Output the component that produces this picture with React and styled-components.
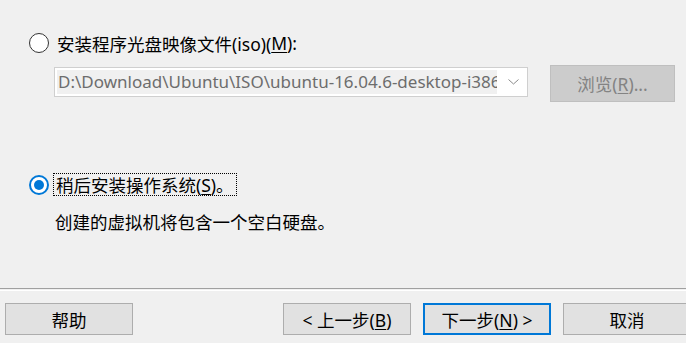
import styled, { createGlobalStyle } from "styled-components";

const GlobalStyle = createGlobalStyle`
  html, body {
    margin: 0;
    padding: 0;
    background: #f0f0f0;
  }
  body {
    font-family: "Noto Sans", "Noto Sans CJK SC", sans-serif;
    font-size: 17px;
    color: #000;
  }
`;

const Key = ({ children }) => <St.Key>{children}</St.Key>;

const Radio = ({ $checked }) => (
  <St.RadioCircle $checked={$checked}>
    {$checked && <St.RadioDot />}
  </St.RadioCircle>
);

const App = () => {
  return (
    <>
      <GlobalStyle />
      <St.Window>
        <St.Main>
          <St.OptionRow>
            <Radio />
            <St.Label>
              安装程序光盘映像文件(iso)(<Key>M</Key>):
            </St.Label>
          </St.OptionRow>

          <St.PathRow>
            <St.Combo>
              <St.ComboText>
                D:\Download\Ubuntu\ISO\ubuntu-16.04.6-desktop-i386.iso
              </St.ComboText>
              <St.ComboArrow>
                <svg width="11" height="6" viewBox="0 0 11 6">
                  <path
                    d="M0.5 0.5 L5.5 5 L10.5 0.5"
                    fill="none"
                    stroke="#8a8a8a"
                    strokeWidth="1"
                  />
                </svg>
              </St.ComboArrow>
            </St.Combo>
            <St.BrowseButton disabled>
              浏览(<Key>R</Key>)...
            </St.BrowseButton>
          </St.PathRow>

          <St.OptionRow $second>
            <Radio $checked />
            <St.Label $focused>
              稍后安装操作系统(<Key>S</Key>)。
            </St.Label>
          </St.OptionRow>

          <St.Description>创建的虚拟机将包含一个空白硬盘。</St.Description>
        </St.Main>

        <St.Separator />

        <St.Footer>
          <St.Button>帮助</St.Button>
          <St.NavGroup>
            <St.Button>
              &lt; 上一步(<Key>B</Key>)
            </St.Button>
            <St.Button $primary>
              下一步(<Key>N</Key>) &gt;
            </St.Button>
            <St.Button>取消</St.Button>
          </St.NavGroup>
        </St.Footer>
      </St.Window>
    </>
  );
};

const St = {
  Window: styled.div`
    width: 686px;
    height: 343px;
    overflow: hidden;
    background: #f0f0f0;
  `,
  Main: styled.section`
    display: flex;
    flex-direction: column;
    height: 288px;
    box-sizing: border-box;
    padding: 33px 0 0 29px;
  `,
  OptionRow: styled.div`
    display: flex;
    align-items: center;
    height: ${({ $second }) => ($second ? "23px" : "20px")};
    margin-top: ${({ $second }) => ($second ? "71px" : "0")};
    gap: ${({ $second }) => ($second ? "4px" : "7px")};
  `,
  RadioCircle: styled.span`
    display: flex;
    justify-content: center;
    align-items: center;
    width: 20px;
    height: 20px;
    box-sizing: border-box;
    border-radius: 50%;
    background: #fff;
    border: ${({ $checked }) =>
      $checked ? "2px solid #0078d7" : "1.5px solid #333"};
    flex-shrink: 0;
  `,
  RadioDot: styled.span`
    width: 10px;
    height: 10px;
    border-radius: 50%;
    background: #0078d7;
  `,
  Label: styled.span`
    display: flex;
    align-items: center;
    height: 23px;
    padding: 0 ${({ $focused }) => ($focused ? "2px" : "0")};
    box-sizing: border-box;
    border: ${({ $focused }) =>
      $focused ? "1px dotted #000" : "1px solid transparent"};
    font-size: 17.5px;
    white-space: nowrap;
  `,
  Key: styled.span`
    text-decoration: underline;
    text-underline-offset: 2px;
  `,
  PathRow: styled.div`
    display: flex;
    align-items: flex-start;
    margin: 12px 0 0 25px;
    gap: 22px;
  `,
  Combo: styled.div`
    display: flex;
    width: 474px;
    height: 30px;
    box-sizing: border-box;
    border: 1px solid #cfcfcf;
    background: #fff;
    margin-top: 2px;
    padding: 2px 0 2px 2px;
  `,
  ComboText: styled.div`
    flex: 1;
    overflow: hidden;
    white-space: nowrap;
    background: #f0f0f0;
    color: #6d6d6d;
    line-height: 24px;
    padding-left: 1px;
  `,
  ComboArrow: styled.div`
    display: flex;
    justify-content: center;
    align-items: center;
    width: 28px;
    padding-left: 2px;
  `,
  BrowseButton: styled.button`
    width: 125px;
    height: 37px;
    border: 1px solid #bfbfbf;
    background: #cccccc;
    color: #838383;
    font: inherit;
    font-size: 17.5px;
    padding: 0;
  `,
  Description: styled.p`
    margin: 14px 0 0 26px;
    line-height: 24px;
    font-size: 17.5px;
    white-space: nowrap;
  `,
  Separator: styled.hr`
    margin: 0;
    height: 1px;
    border: none;
    border-top: 1px solid #a0a0a0;
    border-bottom: 1px solid #fff;
  `,
  Footer: styled.footer`
    display: flex;
    padding: 12px 0 0 5px;
  `,
  NavGroup: styled.div`
    display: flex;
    gap: 12px;
    margin-left: 150px;
  `,
  Button: styled.button`
    flex-shrink: 0;
    width: 128px;
    height: 32px;
    box-sizing: border-box;
    padding: 0;
    font: inherit;
    font-size: 17.5px;
    color: #000;
    background: #e1e1e1;
    border: ${({ $primary }) =>
      $primary ? "2px solid #0078d7" : "1px solid #adadad"};
  `,
};

export default App;
